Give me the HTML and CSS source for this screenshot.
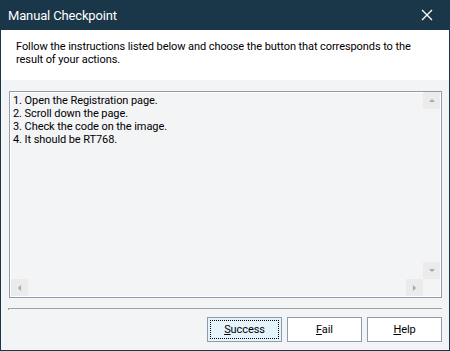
FILE: index.html
```html
<!DOCTYPE html>
<html lang="en">
<head>
  <meta charset="UTF-8">
  <title>Manual Checkpoint</title>
  <link rel="stylesheet" href="styles.css">
</head>
<body>
  <div class="window" role="dialog" aria-labelledby="dlg-title">
    <div class="titlebar">
      <span id="dlg-title">Manual Checkpoint</span>
      <button class="close" aria-label="Close">
        <svg width="12" height="12" viewBox="0 0 12 12"><path d="M1 1 L11 11 M11 1 L1 11" stroke="#fff" stroke-width="1.3" fill="none"/></svg>
      </button>
    </div>

    <div class="intro">
      Follow the instructions listed below and choose the button that corresponds to the result of your actions.
    </div>

    <div class="body">
      <div class="steps-box">
        <div class="steps">
          1. Open the Registration page.<br>
          2. Scroll down the page.<br>
          3. Check the code on the image.<br>
          4. It should be RT768.
        </div>
        <div class="vscroll">
          <span class="sb-btn"><i class="arrow up"></i></span>
          <span class="sb-track"></span>
          <span class="sb-btn"><i class="arrow down"></i></span>
        </div>
        <div class="hscroll">
          <span class="sb-btn"><i class="arrow left"></i></span>
          <span class="sb-track"></span>
          <span class="sb-btn"><i class="arrow right"></i></span>
        </div>
        <div class="sb-corner"></div>
      </div>

      <div class="separator"></div>

      <div class="actions">
        <button class="btn focused"><u>S</u>uccess</button>
        <button class="btn"><u>F</u>ail</button>
        <button class="btn"><u>H</u>elp</button>
      </div>
    </div>
  </div>
</body>
</html>
```

FILE: styles.css
```css
* {
  box-sizing: border-box;
}

body {
  margin: 0;
  font-family: Roboto, "Noto Sans", sans-serif;
  font-size: 11px;
  letter-spacing: -0.08px;
  color: #000;
}

.window {
  width: 450px;
  height: 351px;
  border: 1px solid #1a3649;
  border-top: none;
  background-color: #f3f4f6;
  display: flex;
  flex-direction: column;
}

.titlebar {
  height: 30px;
  background-color: #1a3649;
  color: #fff;
  display: flex;
  align-items: center;
  justify-content: space-between;
  padding-left: 7px;
  font-size: 13px;
  letter-spacing: -0.15px;
}

.close {
  width: 46px;
  height: 30px;
  border: none;
  background: transparent;
  display: flex;
  align-items: center;
  justify-content: center;
  padding: 0;
  margin-right: -1px;
}

.intro {
  background-color: #fff;
  height: 50px;
  padding: 10px 20px 0 15px;
  line-height: 13px;
}

.body {
  flex: 1;
  padding: 11px 7px 0 8px;
  display: flex;
  flex-direction: column;
}

.steps-box {
  height: 207px;
  border: 1px solid #8c9bb0;
  box-shadow: inset 1px 1px 0 #fff, inset -1px -1px 0 #fff;
  display: grid;
  grid-template-columns: 1fr 17px;
  grid-template-rows: 1fr 17px;
  padding: 0 1px 1px 1px;
}

.steps {
  padding: 2px 2px;
  line-height: 13px;
}

.vscroll {
  display: flex;
  flex-direction: column;
}

.hscroll {
  display: flex;
}

.vscroll .sb-btn,
.hscroll .sb-btn {
  width: 17px;
  height: 17px;
  background-color: #ebebeb;
  display: flex;
  align-items: center;
  justify-content: center;
}

.sb-track {
  flex: 1;
}

.arrow {
  width: 0;
  height: 0;
  border: 3.5px solid transparent;
}

.arrow.up {
  border-bottom: 3px solid #a8a8a8;
  border-top-width: 0;
}

.arrow.down {
  border-top: 3px solid #a8a8a8;
  border-bottom-width: 0;
}

.arrow.left {
  border-right: 3px solid #a8a8a8;
  border-left-width: 0;
}

.arrow.right {
  border-left: 3px solid #a8a8a8;
  border-right-width: 0;
}

.separator {
  margin-top: 10px;
  height: 2px;
  border-top: 1px solid #a0a0a0;
  border-left: 1px solid #a0a0a0;
  margin-left: -1px;
}

.actions {
  display: flex;
  justify-content: flex-end;
  gap: 5px;
  margin-top: 7px;
}

.btn {
  width: 75px;
  height: 25px;
  border: 1px solid #8c9bb0;
  background-color: #fff;
  font-family: inherit;
  font-size: 11px;
  letter-spacing: inherit;
  color: #000;
  padding: 0;
  position: relative;
}

.btn.focused {
  background-color: #e5f3fb;
}

.btn.focused::after {
  content: "";
  position: absolute;
  inset: 2px;
  border: 1px dotted #000;
}
```
